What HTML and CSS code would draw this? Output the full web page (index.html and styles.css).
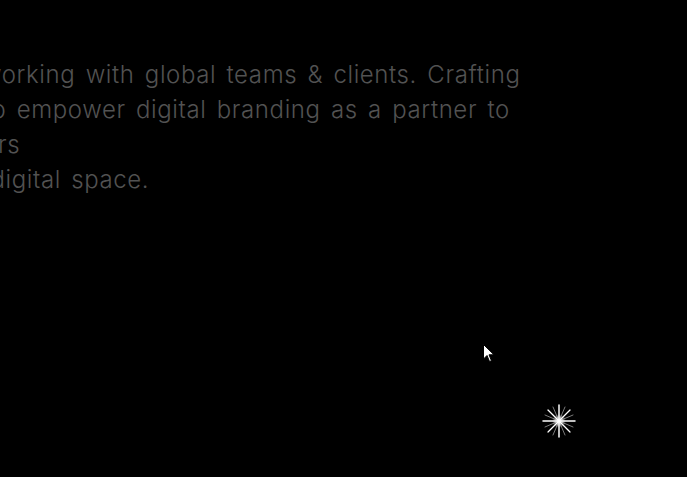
FILE: index.html
```html
<!DOCTYPE html>
<html>
<head>
<meta charset="utf-8">
<link rel="stylesheet" href="styles.css">
</head>
<body>
<main class="stage">
  <p class="intro">
    <span class="line line-1">working with global teams &amp; clients. Crafting</span>
    <span class="line line-2">to empower digital branding as a partner to</span>
    <span class="line line-3">ers</span>
    <span class="line line-4">digital space.</span>
  </p>
  <svg class="cursor" width="12" height="19" viewBox="0 0 12 19"><path d="M0.5 0.5 L0.5 15 L4 11.5 L6.5 17.5 L8.5 16.7 L6 10.8 L11 10.8 Z" fill="#fff" stroke="#000" stroke-width="1"/></svg>
  <svg class="sparkle" width="36" height="36" viewBox="-18 -18 36 36">
    <defs>
      <radialGradient id="glow"><stop offset="0" stop-color="#fff" stop-opacity="0.95"/><stop offset="1" stop-color="#fff" stop-opacity="0"/></radialGradient>
    </defs>
    <circle r="7" fill="url(#glow)"/>
    <g stroke="#fff" stroke-linecap="round">
      <line x1="0" y1="-16" x2="0" y2="16" stroke-width="1.5"/>
      <line x1="-16" y1="0" x2="16" y2="0" stroke-width="1.5"/>
      <line x1="-11" y1="-11" x2="11" y2="11" stroke-width="1.2"/>
      <line x1="-11" y1="11" x2="11" y2="-11" stroke-width="1.2"/>
      <line x1="-6" y1="-14" x2="6" y2="14" stroke-width="0.8" opacity="0.6"/>
      <line x1="6" y1="-14" x2="-6" y2="14" stroke-width="0.8" opacity="0.6"/>
      <line x1="-14" y1="-6" x2="14" y2="6" stroke-width="0.8" opacity="0.6"/>
      <line x1="-14" y1="6" x2="14" y2="-6" stroke-width="0.8" opacity="0.6"/>
    </g>
  </svg>
</main>
</body>
</html>
```
FILE: styles.css
```css
html, body {
  margin: 0;
  padding: 0;
  background: #000;
  overflow: hidden;
}
.stage {
  position: relative;
  width: 687px;
  height: 477px;
  overflow: hidden;
}
.intro {
  margin: 0;
  padding-top: 57px;
  font-family: Inter, "Noto Sans", sans-serif;
  font-weight: 300;
  font-size: 24px;
  letter-spacing: 0.6px;
  word-spacing: 3px;
  line-height: 35px;
  color: #525252;
  white-space: nowrap;
}
.line {
  display: block;
}
.line-1 { margin-left: -18px; }
.line-2 { margin-left: -16px; }
.line-3 { margin-left: -16.5px; }
.line-4 { margin-left: -9.5px; }
.cursor {
  position: absolute;
  left: 483px;
  top: 344px;
}
.sparkle {
  position: absolute;
  left: 541px;
  top: 403px;
}
```
